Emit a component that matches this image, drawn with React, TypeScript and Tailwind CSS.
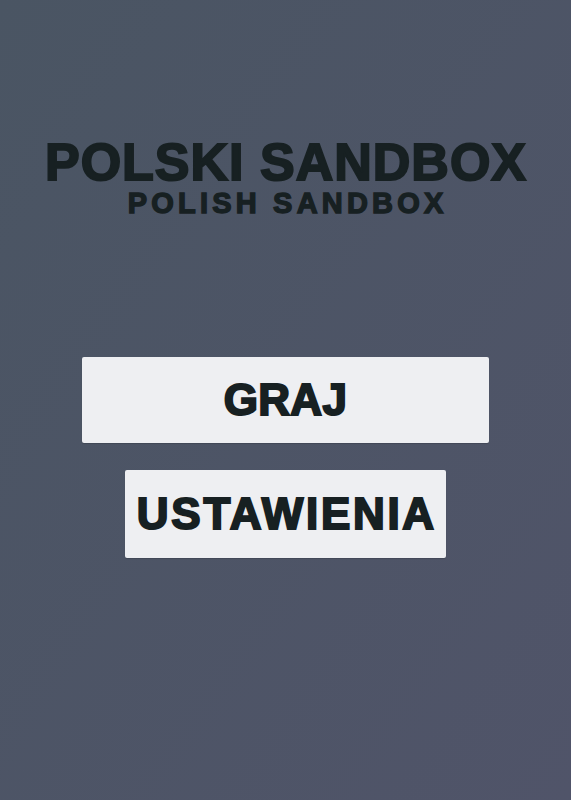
export default function App() {
  const face = "[font-family:'Liberation_Sans',Arial,sans-serif] font-bold text-[#172022]";
  const ink = "[-webkit-text-stroke:2px_#172022]";
  const inkThin = "[-webkit-text-stroke:1.4px_#172022]";
  return (
    <div className="min-h-[800px] w-full flex flex-col items-center bg-linear-to-br from-[#4a5563] to-[#505469]">
      <div className="pt-[136px] flex flex-col items-center">
        <h1 className={`${face} ${ink} text-[52px] leading-[52px] tracking-[1px] pl-[1px]`}>POLSKI SANDBOX</h1>
        <h2 className={`${face} ${inkThin} text-[29px] leading-[29px] mt-px tracking-[4.2px] pl-[4.2px]`}>POLISH SANDBOX</h2>
      </div>

      <button className="mt-[139px] w-[407px] h-[86px] flex items-center justify-center bg-[#eeeff2] rounded-[2px] shadow-[0_1px_1px_rgba(0,0,0,0.15)]">
        <span className={`${face} ${ink} text-[44px] leading-[44px] tracking-[0.3px]`}>GRAJ</span>
      </button>

      <button className="mt-[27px] h-[88px] px-[9px] flex items-center justify-center bg-[#eeeff2] rounded-[2px] shadow-[0_1px_1px_rgba(0,0,0,0.15)]">
        <span className={`${face} ${ink} text-[44px] leading-[44px] tracking-[2.7px] pl-[2.7px]`}>USTAWIENIA</span>
      </button>
    </div>
  );
}
